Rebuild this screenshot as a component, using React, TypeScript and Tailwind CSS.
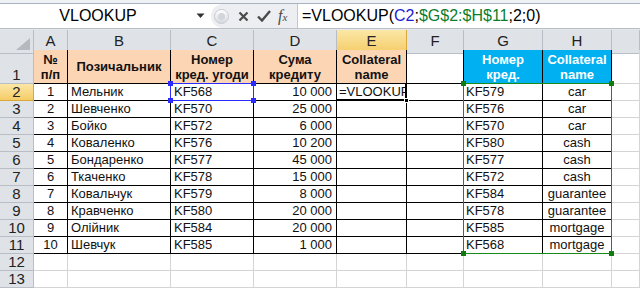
import React from "react";

const COLS = "grid grid-cols-[34px_34px_103px_83px_83px_70px_57px_79px_69px_1fr]";
const GRID = "border-[#d4d4d4]";
const BLK = "border-black";

const left = [
  ["1", "Мельник", "KF568", "10 000"],
  ["2", "Шевченко", "KF570", "25 000"],
  ["3", "Бойко", "KF572", "6 000"],
  ["4", "Коваленко", "KF576", "10 200"],
  ["5", "Бондаренко", "KF577", "45 000"],
  ["6", "Ткаченко", "KF578", "15 000"],
  ["7", "Ковальчук", "KF579", "8 000"],
  ["8", "Кравченко", "KF580", "20 000"],
  ["9", "Олійник", "KF584", "20 000"],
  ["10", "Шевчук", "KF585", "1 000"],
];
const right = [
  ["KF579", "car"],
  ["KF576", "car"],
  ["KF570", "car"],
  ["KF580", "cash"],
  ["KF577", "cash"],
  ["KF572", "cash"],
  ["KF584", "guarantee"],
  ["KF578", "guarantee"],
  ["KF585", "mortgage"],
  ["KF568", "mortgage"],
];

function Cell({ cls = "", children }: { cls?: string; children?: React.ReactNode }) {
  return (
    <div className={`border-r border-b overflow-hidden whitespace-nowrap flex items-end pb-[1px] text-[13px] leading-[15px] text-[#111] ${cls}`}>
      {children}
    </div>
  );
}

function RowHead({ n, active = false }: { n: number; active?: boolean }) {
  return (
    <div
      className={`border-r border-b flex items-end justify-center text-[15px] leading-[16px] text-[#222] ${
        active
          ? "bg-gradient-to-b from-[#fbe7a6] to-[#f5cc66] border-[#d9a93c]"
          : "bg-[#dfe3e8] border-[#b9bec6]"
      }`}
    >
      {n}
    </div>
  );
}

function Sq({ cls }: { cls: string }) {
  return <div className={`absolute w-[5px] h-[5px] ${cls}`} />;
}

export default function App() {
  const colHeads = ["A", "B", "C", "D", "E", "F", "G", "H", ""];
  return (
    <div className="w-[640px] h-[290px] overflow-hidden bg-white font-['Liberation_Sans',Arial,sans-serif] select-none">
      {/* ribbon edge */}
      <div className="h-[4px] bg-[#eef1f5] border-b border-[#a9b2bd]" />
      {/* formula bar */}
      <div className="h-[25px] flex bg-white border-b border-[#b9bec6]">
        <div className="w-[211px] flex items-center">
          <div className="w-[196px] text-center text-[16px] text-black">VLOOKUP</div>
          <svg width="9" height="6" viewBox="0 0 9 6" className="ml-[0px]">
            <path d="M0.5 0.5 L8.5 0.5 L4.5 5 Z" fill="#333" />
          </svg>
        </div>
        <div className="w-[87px] flex items-center bg-[#eceef1] rounded-l-full border-r border-[#c3c8cf]">
          <div className="ml-[3px] w-[15px] h-[15px] rounded-full bg-gradient-to-b from-[#ffffff] to-[#d6d9de] border border-[#c7cbd1] flex items-center justify-center">
            <div className="w-[7px] h-[7px] rounded-full bg-[#d2d5da]" />
          </div>
          <svg width="11" height="11" viewBox="0 0 11 11" className="ml-[9px]">
            <path d="M1.5 1.5 L9.5 9.5 M9.5 1.5 L1.5 9.5" stroke="#4a4a4a" strokeWidth="2.2" />
          </svg>
          <svg width="14" height="12" viewBox="0 0 14 12" className="ml-[8px]">
            <path d="M1 6.5 L5 10.5 L13 1" stroke="#4a4a4a" strokeWidth="2.4" fill="none" />
          </svg>
          <span className="ml-[7px] font-['Liberation_Serif',serif] italic text-[16px] leading-none text-[#4a4a4a]">
            f<span className="text-[11px]">x</span>
          </span>
        </div>
        <div className="flex-1 flex items-center pl-[4px] text-[16px] text-black whitespace-nowrap">
          =VLOOKUP(<span className="text-[#1d1dd6]">C2</span>;<span className="text-[#0a7d2c]">$G$2:$H$11</span>;2;0)
        </div>
      </div>
      <div className="h-[1px] bg-[#e4e7eb]" />

      {/* sheet */}
      <div className="relative">
        {/* column header row */}
        <div className={`${COLS} h-[20px]`}>
          <div className="relative bg-[#dfe3e8] border-r border-b border-[#b9bec6]">
            <svg width="14" height="12" viewBox="0 0 14 12" className="absolute right-[3px] bottom-[3px]">
              <path d="M14 0 L14 12 L0 12 Z" fill="#b5bac1" />
            </svg>
          </div>
          {colHeads.map((c, i) => (
            <div
              key={i}
              className={`border-r border-b flex items-center justify-center text-[15px] text-[#222] ${
                c === "E"
                  ? "bg-gradient-to-b from-[#fbe7a6] to-[#f5cc66] border-[#d9a93c]"
                  : "bg-[#dfe3e8] border-[#b9bec6]"
              }`}
            >
              {c}
            </div>
          ))}
        </div>

        {/* row 1 */}
        <div className={`${COLS} h-[34px]`}>
          <RowHead n={1} />
          {[
            ["№", "п/п"],
            ["Позичальник"],
            ["Номер", "кред. угоди"],
            ["Сума", "кредиту"],
            ["Collateral", "name"],
          ].map((lines, i) => (
            <div
              key={i}
              className={`border-r border-b ${BLK} bg-[#fcd5b4] flex flex-col items-center justify-center text-[13px] leading-[15px] font-bold text-[#111] whitespace-nowrap overflow-hidden`}
            >
              {lines.map((l, j) => (
                <div key={j}>{l}</div>
              ))}
            </div>
          ))}
          <Cell cls={BLK} />
          {[
            ["Номер", "кред."],
            ["Collateral", "name"],
          ].map((lines, i) => (
            <div
              key={i}
              className={`border-r border-b ${BLK} bg-[#00b0f0] flex flex-col items-center justify-center text-[13px] leading-[15px] font-bold text-white whitespace-nowrap overflow-hidden`}
            >
              {lines.map((l, j) => (
                <div key={j}>{l}</div>
              ))}
            </div>
          ))}
          <Cell cls={GRID} />
        </div>

        {/* rows 2-13 */}
        {Array.from({ length: 12 }).map((_, r) => {
          const n = r + 2;
          const L = left[r];
          const R = right[r];
          return (
            <div key={n} className={`${COLS} h-[17px]`}>
              <RowHead n={n} active={n === 2} />
              {L ? (
                <>
                  <Cell cls={`${BLK} justify-center`}>{L[0]}</Cell>
                  <Cell cls={`${BLK} pl-[3px]`}>{L[1]}</Cell>
                  <Cell cls={`${BLK} pl-[3px]`}>{L[2]}</Cell>
                  <Cell cls={`${BLK} justify-end pr-[4px]`}>{L[3]}</Cell>
                  <Cell cls={`${BLK} pl-[2px]`}>{n === 2 ? "=VLOOKUP" : ""}</Cell>
                  <Cell cls={BLK} />
                  <Cell cls={`${BLK} pl-[2px]`}>{R[0]}</Cell>
                  <Cell cls={`${BLK} justify-center`}>{R[1]}</Cell>
                </>
              ) : (
                <>
                  <Cell cls={GRID} />
                  <Cell cls={GRID} />
                  <Cell cls={GRID} />
                  <Cell cls={GRID} />
                  <Cell cls={GRID} />
                  <Cell cls={GRID} />
                  <Cell cls={GRID} />
                  <Cell cls={GRID} />
                </>
              )}
              <Cell cls={GRID} />
            </div>
          );
        })}

        {/* C2 reference highlight (blue) */}
        <div className="absolute left-[170px] top-[53px] w-[84px] h-[18px] border border-[#2b2bff]" />
        <Sq cls="left-[168px] top-[51px] bg-[#2b2bff]" />
        <Sq cls="left-[251px] top-[51px] bg-[#2b2bff]" />
        <Sq cls="left-[168px] top-[68px] bg-[#2b2bff]" />
        <Sq cls="left-[251px] top-[68px] bg-[#2b2bff]" />

        {/* G2:H11 reference highlight (green) */}
        <div className="absolute left-[463px] top-[53px] w-[149px] h-[171px] border border-[#178a17]" />
        <Sq cls="left-[461px] top-[51px] bg-[#107c10]" />
        <Sq cls="left-[609px] top-[51px] bg-[#107c10]" />
        <Sq cls="left-[461px] top-[221px] bg-[#107c10]" />
        <Sq cls="left-[609px] top-[221px] bg-[#107c10]" />

        {/* E2 active cell */}
        <div className="absolute left-[336px] top-[53px] w-[71px] h-[18px] border-r-2 border-b-2 border-black" />
        <Sq cls="left-[404px] top-[68px] bg-black border border-white" />
      </div>
    </div>
  );
}
